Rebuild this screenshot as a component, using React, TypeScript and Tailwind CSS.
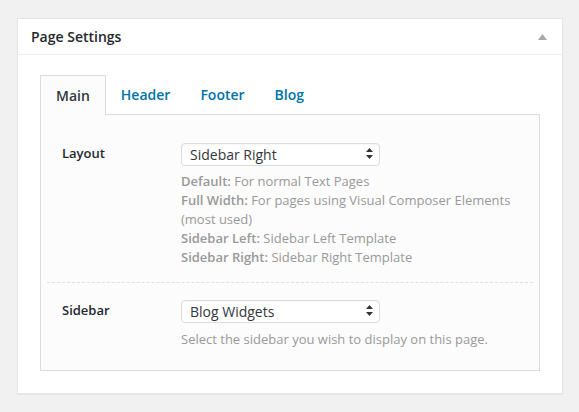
import { useState } from 'react';

const tabs = ['Main', 'Header', 'Footer', 'Blog'];

function SelectBox({ value, options }: { value: string; options: string[] }) {
  return (
    <div className="relative w-[199px] h-[23px]">
      <select
        defaultValue={value}
        className="appearance-none w-full h-full rounded-[4px] border border-[#dcdcdc] bg-white pl-[8px] pr-6 text-[14px] leading-[21px] text-[#32373c] shadow-[inset_0_1px_2px_rgba(0,0,0,0.04)] outline-none"
      >
        {options.map((o) => (
          <option key={o}>{o}</option>
        ))}
      </select>
      <svg
        className="pointer-events-none absolute right-[7px] top-[6px]"
        width="7"
        height="11"
        viewBox="0 0 7 11"
      >
        <path d="M3.5 0 L7 4 L0 4 Z" fill="#333" />
        <path d="M0 7 L7 7 L3.5 11 Z" fill="#333" />
      </svg>
    </div>
  );
}

export default function App() {
  const [active, setActive] = useState('Main');

  return (
    <div className="min-h-[412px] bg-[#f1f1f1] pt-[18px] font-['Open_Sans',sans-serif]">
      <div className="ml-[17px] w-[546px] border border-[#e5e5e5] bg-white shadow-[0_1px_1px_rgba(0,0,0,0.04)]">
        <div className="flex h-[36px] items-center justify-between border-b border-[#eeeeee] pl-[13px] pr-[15px]">
          <h2 className="text-[14px] font-semibold text-[#23282d]">Page Settings</h2>
          <svg width="9" height="6" viewBox="0 0 9 6">
            <path d="M4.5 0 L9 6 L0 6 Z" fill="#a8a8a8" />
          </svg>
        </div>

        <div className="px-[22px] pt-[20px] pb-[22px]">
          <div className="flex">
            {tabs.map((t) => (
              <button
                key={t}
                type="button"
                onClick={() => setActive(t)}
                className={
                  t === active
                    ? 'relative -mb-px h-[40px] border border-b-0 border-[#dcdcdc] bg-[#fcfcfc] px-[15px] text-[14px] font-semibold text-[#32373c]'
                    : 'h-[39px] px-[15px] text-[14px] font-semibold text-[#0073aa]'
                }
              >
                {t}
              </button>
            ))}
          </div>

          <div className="border border-[#dcdcdc] bg-[#fcfcfc] px-[6px]">
            <div className="flex border-b border-dashed border-[#e1e1e1] pt-[27px] pb-[15px] pl-[15px]">
              <div className="w-[119px] text-[13px] font-semibold leading-[23px] text-[#23282d]">Layout</div>
              <div>
                <SelectBox
                  value="Sidebar Right"
                  options={['Default', 'Full Width', 'Sidebar Left', 'Sidebar Right']}
                />
                <p className="mt-[7px] text-[13px] leading-[19px] text-[#999999]">
                  <b className="font-semibold">Default:</b> For normal Text Pages
                  <br />
                  <b className="font-semibold">Full Width:</b> For pages using Visual Composer Elements
                  <br />
                  (most used)
                  <br />
                  <b className="font-semibold">Sidebar Left:</b> Sidebar Left Template
                  <br />
                  <b className="font-semibold">Sidebar Right:</b> Sidebar Right Template
                </p>
              </div>
            </div>

            <div className="flex pt-[16px] pb-[21px] pl-[15px]">
              <div className="w-[119px] text-[13px] font-semibold leading-[23px] text-[#23282d]">Sidebar</div>
              <div>
                <SelectBox value="Blog Widgets" options={['Blog Widgets', 'Page Widgets']} />
                <p className="mt-[8px] text-[13px] leading-[19px] text-[#999999]">
                  Select the sidebar you wish to display on this page.
                </p>
              </div>
            </div>
          </div>
        </div>
      </div>
    </div>
  );
}
